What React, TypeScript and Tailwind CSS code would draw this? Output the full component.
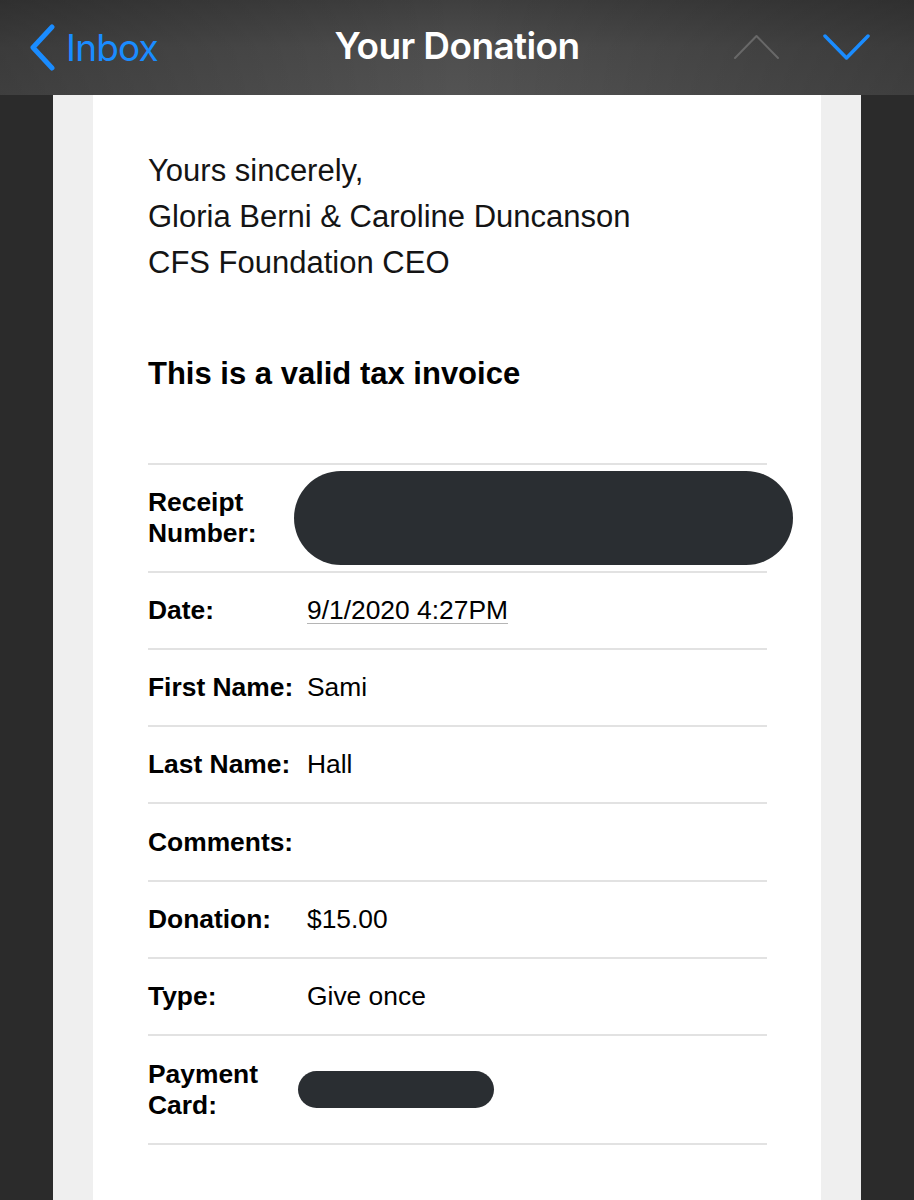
import React from 'react';

const rows: { label: React.ReactNode; value?: React.ReactNode; h: string }[] = [
  {
    label: (
      <>
        Receipt
        <br />
        Number:
      </>
    ),
    value: <div className="-ml-[13px] h-[94px] w-[499px] rounded-[47px] bg-[#2a2e32]" />,
    h: 'h-[108px]',
  },
  {
    label: 'Date:',
    value: (
      <span className="underline decoration-[#b5b5b5] decoration-1 underline-offset-[4px]">
        9/1/2020 4:27PM
      </span>
    ),
    h: 'h-[77px]',
  },
  { label: 'First Name:', value: 'Sami', h: 'h-[77px]' },
  { label: 'Last Name:', value: 'Hall', h: 'h-[77px]' },
  { label: 'Comments:', h: 'h-[78px]' },
  { label: 'Donation:', value: '$15.00', h: 'h-[77px]' },
  { label: 'Type:', value: 'Give once', h: 'h-[77px]' },
  {
    label: (
      <>
        Payment
        <br />
        Card:
      </>
    ),
    value: <div className="-ml-[9px] h-[37px] w-[196px] rounded-[19px] bg-[#2a2e32]" />,
    h: 'h-[109px]',
  },
];

export default function App() {
  return (
    <div className="h-[1200px] w-full overflow-hidden bg-[#2b2b2b] flex flex-col">
      <header className="relative h-[95px] shrink-0 bg-gradient-to-b from-[#3f3f3f] via-[#4e4e4e] to-[#535353] font-['Inter',sans-serif]">
        <div className="absolute inset-0 bg-gradient-to-r from-black/25 via-transparent to-black/25" />
        <div className="relative h-full flex items-center px-[29px]">
          <div className="flex items-center gap-[11px] text-[#1a8cff]">
            <svg width="26" height="47" viewBox="0 0 26 47" fill="none">
              <path d="M23 3 L4 23.5 L23 44" stroke="#1a8cff" strokeWidth="5" strokeLinecap="round" strokeLinejoin="round" />
            </svg>
            <span className="text-[37px] leading-none tracking-[-0.8px] -mt-[1px]">Inbox</span>
          </div>
          <div className="absolute left-0 right-0 top-[27px] text-center text-[37px] font-semibold leading-none text-white tracking-[-0.6px]">
            Your Donation
          </div>
          <div className="ml-auto flex items-center gap-[43px] pr-[15px] -mt-[2px]">
            <svg width="47" height="26" viewBox="0 0 47 26" fill="none">
              <path d="M2 24 L23.5 2 L45 24" stroke="#686868" strokeWidth="2" strokeLinecap="round" strokeLinejoin="round" />
            </svg>
            <svg width="47" height="26" viewBox="0 0 47 26" fill="none">
              <path d="M2 2 L23.5 24 L45 2" stroke="#1a8cff" strokeWidth="3.5" strokeLinecap="round" strokeLinejoin="round" />
            </svg>
          </div>
        </div>
      </header>
      <div className="flex-1 mx-[53px] px-[40px] bg-[#efefef]">
        <div className="h-full bg-white pl-[55px] pt-[53px] font-['Liberation_Sans',Arial,sans-serif] text-black">
          <div className="text-[31px] leading-[46px] font-light text-[#141414]">
            <p>Yours sincerely,</p>
            <p>Gloria Berni &amp; Caroline Duncanson</p>
            <p>CFS Foundation CEO</p>
          </div>
          <p className="mt-[65px] text-[31px] leading-[46px] font-bold">This is a valid tax invoice</p>
          <div className="mt-[66px] w-[619px] border-b-2 border-[#e2e2e2]">
            {rows.map((r, i) => (
              <div key={i} className={`${r.h} flex items-center border-t-2 border-[#e2e2e2]`}>
                <div className="w-[159px] shrink-0 text-[26.4px] leading-[31px] font-bold">{r.label}</div>
                <div className="text-[26.4px] leading-[31px]">{r.value}</div>
              </div>
            ))}
          </div>
        </div>
      </div>
    </div>
  );
}
